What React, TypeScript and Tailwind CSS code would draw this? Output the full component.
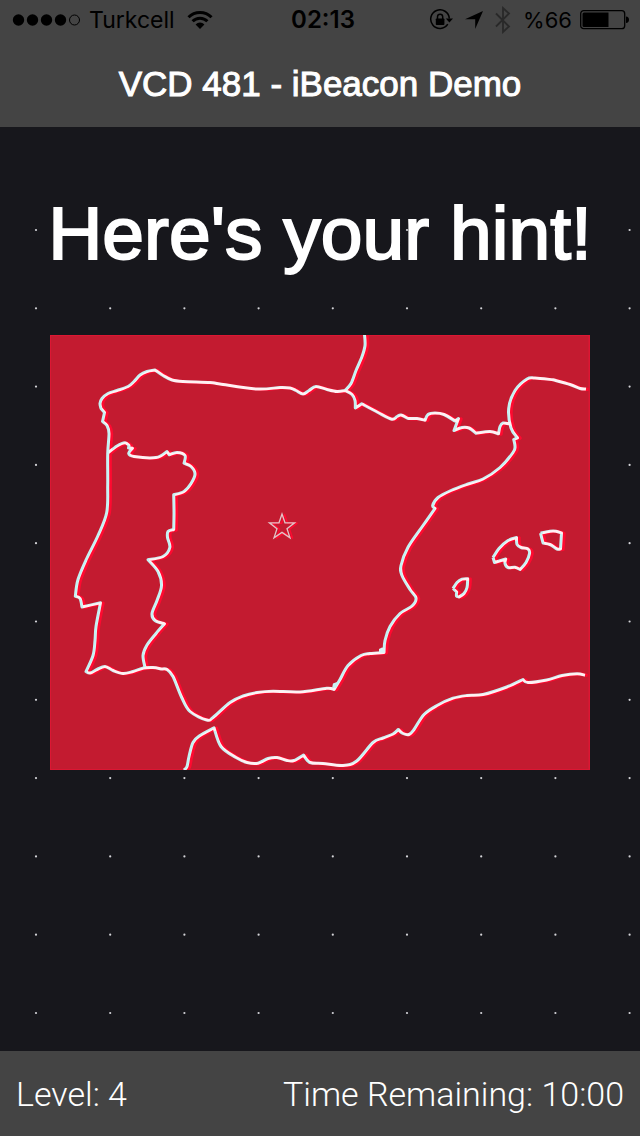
import React from "react";

type Point = [number, number];

/** Coast lines and borders. "|" marks a sharp corner, spaces separate points on a smooth run. */
const LINES: string[] = [
  // Atlantic and Mediterranean coast, from the French border round to the north-east
  "345,390 337,391 327,389 316,386 309,390 303,393.5 296,390 290,387.5 280,387 257,388.5 220,383.5 210,382 183,381 172,379.5 163,375 155,369.5 | 147,371 140,374.5 134,381 128,386 117,390 108,393 102,398 100,403 101,408 | 104.5,412 | 102.5,421 | 107,425 109,433 107.7,453 107.7,485 106.7,512 98,535 86.7,558 78,579 75.3,595.7 | 80,598 82,606.5 | 100.5,602.3 | 96,626 95,640 93,655 86,671 | 90,672.5 97,669 105,666 113,670 123,673 133,671 143.5,667.5 153,667 161.7,668.5 | 167,669 173,676 181.7,697 190,711 206.7,719.5 213,717 230,702 243,695.5 257,692 273,690.7 300,691.5 326.7,687.7 334,689 | 340,679 348,665 361,655 370,653 384,652 | 385,640 390,626 400,613 412,605.5 416,597.5 410,589 402,575 401,565 408,546.7 423,525 435,508 | 432.7,505 438,497 451,490 468,483.5 483,478.5 500,467 513,452 515,446 513.7,439 | 517.5,437.3 | 511,427.5 508.7,408 515,390 527,378.5 535,377.5 553,379.3 | 570,384 580,388 586,388.5",
  // Bay of Biscay
  "345,390 351,383 356,370 362,356 365,345 364.5,334",
  // Pyrenees
  "345,390 352,394 355,400 355.3,407.5 | 361.7,403.3 | 378,412 391.7,418.7 397,416 401,414.5 408,418 | 417,418 425,419.7 | 428,414 435,412.5 444,414 455,420.5 | 458.5,418 | 454,430 | 462,427 469,427.5 476,432.7 | 490,431 498.5,433.3 | 500,426 503,422.5 510,423.5",
  // Portuguese border
  "107.7,452.7 117,445.5 125,442.3 129,445 | 128.5,447.5 | 132.5,447.7 | 128.7,453 134,456 156,457 167,451 | 169.3,454.3 | 177,452 185,455 184,462.7 | 191,466 195,473.5 191,483 184,491 173.7,494.3 | 174,512 173.7,529 | 168,531 167.5,537 169.8,547 163,556 148,559.3 | 158,571 161.5,585 157,600 152,613 155,620 164.5,623.3 | 156,633 146.7,645 143,655 145,667",
  // North Africa
  "184,769.5 187,766 189,756 193,742 200,735 214,727.3 | 221,746 236,757 247,762 258,762.7 268,758 277,757 287,760 294,760 303.5,754.5 | 310,762 323,763 343,765 356.7,760.5 373,742 383,737.5 393,733.5 398.3,729 | 403,733 409,734 414,729 424,714 437,705 453,697.7 467,695 483,694 506.7,686.5 523,679 | 528,682 546.7,679.5 562,675 577,673.2 585,674.7",
  // Balearic islands
  "493,557 | 499,548 508,540 516.5,537 | 517,544 521,547 528,548.5 529.5,553 526,562 520,569 | 515,566.7 508,567 505,563 505.7,558.5 | 494.5,562 | 493,557",
  "540.5,532.7 | 550,530.7 556,530.7 561.5,532.5 | 560.5,548.5 | 557,548.5 550,544 543,542.5 | 540.5,532.7",
  "453,588 | 457,582 462,578.7 467.7,578.3 | 467,587 464,593 459,596.5 | 456.5,595.5 456.7,591.5 | 453,588",
];

function smoothPath(line: string): string {
  let last: Point | null = null;
  let d = "";
  for (const piece of line.split("|")) {
    const run = piece
      .trim()
      .split(" ")
      .map((p) => p.split(",").map(Number) as Point);
    const pts: Point[] = last ? [last, ...run] : run;
    if (!last) d = `M${pts[0].join(" ")}`;
    for (let i = 0; i < pts.length - 1; i++) {
      const a = pts[Math.max(i - 1, 0)];
      const b = pts[i];
      const c = pts[i + 1];
      const e = pts[Math.min(i + 2, pts.length - 1)];
      d += `C${b[0] + (c[0] - a[0]) / 6} ${b[1] + (c[1] - a[1]) / 6} ${c[0] - (e[0] - b[0]) / 6} ${c[1] - (e[1] - b[1]) / 6} ${c[0]} ${c[1]}`;
    }
    last = pts[pts.length - 1];
  }
  return d;
}

const MAP_PATH = LINES.map(smoothPath).join("");

const STAR_PATH =
  "M282 513.5L285 522.3H294.6L287 528.2L290 537.3L282 531.9L274 537.3L277 528.2L269.4 522.3H279Z";

function HintMap() {
  return (
    <svg viewBox="50 334.5 540 435" className="isolate block w-full" role="img" aria-label="Map hint">
      <rect x="50" y="334.5" width="540" height="435" fill="#dc1733" />
      <rect x="51" y="335.5" width="537.5" height="433" fill="#c31b30" />
      <g fill="none" stroke="#ff0a30" strokeWidth="3.2" strokeLinejoin="round">
        <path d={MAP_PATH} transform="translate(2.6 0.4)" />
        <path d={STAR_PATH} strokeWidth="1.4" transform="translate(2.6 0.4)" />
      </g>
      <g className="mix-blend-screen" fill="none" stroke="#00f0f0" strokeWidth="3" strokeLinejoin="round">
        <path d={MAP_PATH} />
      </g>
      <path d="M379 652v-3.5l3-1.5 3 .5v5z" fill="#d8f5f5" />
      <path d="M332 688l1-5 4-1.5-1 5z" fill="#c8f2f2" />
      <path d={STAR_PATH} fill="none" stroke="#e3c4c8" strokeWidth="1.3" />
    </svg>
  );
}

function DotGrid() {
  const rows = Array.from({ length: 11 }, (_, i) => 103 + i * 78.3);
  const cols = Array.from({ length: 9 }, (_, i) => 36 + i * 74.2);
  return (
    <svg className="absolute inset-0 h-full w-full" aria-hidden="true">
      {rows.map((y) =>
        cols.map((x) => <circle key={`${x}-${y}`} cx={x} cy={y} r="1.1" fill="#d4d4d8" />),
      )}
    </svg>
  );
}

function StatusBar() {
  return (
    <div className="grid h-10 grid-cols-[1fr_auto_1fr] items-center pr-[10px] pl-3 text-black">
      <div className="flex items-center gap-2">
        <svg width="69" height="14" viewBox="0 0 69 14" aria-hidden="true">
          {[6.5, 20.5, 34.5, 48.5].map((x) => (
            <circle key={x} cx={x} cy="7" r="5.7" />
          ))}
          <circle cx="62.5" cy="7" r="5" fill="none" stroke="#000" />
        </svg>
        <span className="text-[23px]">Turkcell</span>
        <svg className="ml-1" width="26" height="20" viewBox="0 0 26 20" aria-hidden="true">
          <g fill="none" stroke="#000" strokeWidth="3">
            <path d="M1.5 7.2a16.2 16.2 0 0 1 23 0" />
            <path d="M5.6 11.3a10.4 10.4 0 0 1 14.8 0" />
          </g>
          <path d="M8.6 14.4a6.2 6.2 0 0 1 8.8 0L13 19z" />
        </svg>
      </div>
      <span className="pl-1 text-[24px] font-semibold">02:13</span>
      <div className="flex items-center justify-end">
        <svg width="24" height="22" viewBox="0 0 24 22" aria-hidden="true">
          <path d="M18.8 15.2A9.3 9.3 0 1 1 20.3 9.5" fill="none" stroke="#000" strokeWidth="1.5" />
          <path d="M16.8 9.4H24l-3.6 4z" />
          <rect x="6.8" y="9.5" width="8.6" height="6.6" rx=".8" />
          <path d="M8.5 10V7.8a2.6 2.6 0 0 1 5.2 0V10" fill="none" stroke="#000" strokeWidth="1.5" />
        </svg>
        <svg className="ml-3" width="18" height="18" viewBox="0 0 18 18" aria-hidden="true">
          <path d="M18 0L10.2 18V8.3H0z" />
        </svg>
        <svg className="ml-3" width="16" height="28" viewBox="0 0 16 28" aria-hidden="true">
          <path
            d="M1 7.5L14 20.5L8 26V2L14 7.5L1 20.5"
            fill="none"
            stroke="#292929"
            strokeWidth="1.8"
          />
        </svg>
        <span className="ml-3 text-[22px]">%66</span>
        <svg className="ml-2" width="50" height="20" viewBox="0 0 50 20" aria-hidden="true">
          <rect x=".7" y=".7" width="44" height="18" rx="3" fill="none" stroke="#000" strokeWidth="1.3" />
          <path d="M4 2.5H28.5V17H4a1.5 1.5 0 0 1-1.5-1.5V4A1.5 1.5 0 0 1 4 2.5z" />
          <path d="M46 6.5c4 0 4 6.5 0 6.5z" />
        </svg>
      </div>
    </div>
  );
}

export default function App() {
  return (
    <div className="flex min-h-screen flex-col bg-[#17171c] font-['Liberation_Sans',sans-serif] text-white">
      <header className="bg-[#444444] pb-[23px]">
        <div className="font-['Inter',sans-serif]">
          <StatusBar />
        </div>
        <h1 className="pt-6 text-center text-[35px] leading-10 [-webkit-text-stroke:1px_white]">
          VCD 481 - iBeacon Demo
        </h1>
      </header>

      <main className="relative flex-1">
        <DotGrid />
        <div className="relative px-[50px] pt-16">
          <h2 className="-mx-6 text-center text-[75px] leading-[84px] whitespace-nowrap [-webkit-text-stroke:2px_white]">
            Here's your hint!
          </h2>
          <div className="pt-[60px]">
            <HintMap />
          </div>
        </div>
      </main>

      <footer className="flex items-center justify-between bg-[#444444] px-4 pt-[23px] pb-[22px] font-['Roboto',sans-serif] text-[34px] leading-10 font-light">
        <span>Level: 4</span>
        <span>Time Remaining: 10:00</span>
      </footer>
    </div>
  );
}
